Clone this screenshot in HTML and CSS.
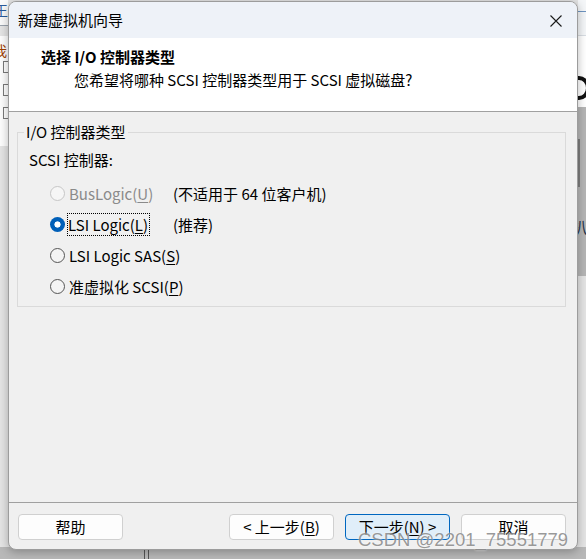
FILE: index.html
```html
<!DOCTYPE html>
<html lang="zh-CN">
<head>
<meta charset="utf-8">
<title>新建虚拟机向导</title>
<link rel="stylesheet" href="styles.css">
</head>
<body>
<div class="desktop">
  <div class="bg-left-top"><span class="bg-char">王</span></div>
  <div class="bg-left-panel">
    <span class="bg-orange">我</span>
    <span class="bg-box"></span>
    <span class="bg-box"></span>
    <span class="bg-box"></span>
  </div>
  <div class="bg-right-top"></div>
  <div class="bg-right-white"><span class="bg-ring"></span></div>
  <div class="bg-right-gray"><span class="bg-bar"></span><span class="bg-rchar">扒</span></div>
  <div class="bg-bottom"><span class="bg-vline"></span></div>

  <div class="dialog">
    <div class="titlebar">
      <span class="title">新建虚拟机向导</span>
      <svg class="close" width="12" height="12" viewBox="0 0 12 12"><path d="M0.5 0.5 L11.5 11.5 M11.5 0.5 L0.5 11.5" stroke="#1a1a1a" stroke-width="1.1" fill="none"/></svg>
    </div>
    <div class="header">
      <div class="h-title">选择 I/O 控制器类型</div>
      <div class="h-sub">您希望将哪种 SCSI 控制器类型用于 SCSI 虚拟磁盘?</div>
    </div>
    <div class="body">
      <fieldset class="group">
        <legend>I/O 控制器类型</legend>
        <div class="group-inner">
          <div class="caption">SCSI 控制器:</div>
          <div class="row disabled">
            <span class="radio"></span>
            <span class="label">BusLogic(<u>U</u>)</span>
            <span class="note">(不适用于 64 位客户机)</span>
          </div>
          <div class="row">
            <span class="radio checked"></span>
            <span class="label"><span class="focus">LSI Logic(<u>L</u>)</span></span>
            <span class="note">(推荐)</span>
          </div>
          <div class="row">
            <span class="radio"></span>
            <span class="label wide">LSI Logic SAS(<u>S</u>)</span>
          </div>
          <div class="row">
            <span class="radio"></span>
            <span class="label wide">准虚拟化 SCSI(<u>P</u>)</span>
          </div>
        </div>
      </fieldset>
    </div>
    <div class="footer">
      <button class="btn">帮助</button>
      <span class="spacer"></span>
      <button class="btn">&lt; 上一步(<u>B</u>)</button>
      <button class="btn primary">下一步(<u>N</u>) &gt;</button>
      <button class="btn">取消</button>
    </div>
  </div>
  <div class="watermark">CSDN @2201_75551779</div>
</div>
</body>
</html>
```
FILE: styles.css
```css
* { box-sizing: border-box; }
html, body {
  margin: 0;
  padding: 0;
  width: 586px;
  height: 559px;
  overflow: hidden;
}
body {
  font-family: "Noto Sans CJK SC", "Noto Sans", sans-serif;
  font-size: 15px;
  color: #000;
  background: #e4e4e4;
}
.desktop {
  position: relative;
  width: 586px;
  height: 559px;
  padding: 1px 8px 0 8px;
}

/* backdrop bits visible around the dialog */
.bg-left-top {
  position: absolute; left: 0; top: 0; width: 8px; height: 26px;
  background: #fafafa; border-bottom: 1px solid #9aa3ad; overflow: hidden;
}
.bg-char { position: absolute; left: -6px; top: 0; font-size: 14px; line-height: 20px; color: #2a5a9a; }
.bg-left-panel {
  position: absolute; left: 0; top: 36px; width: 8px; height: 110px;
  background: #fdfdfd; overflow: hidden;
}
.bg-orange { position: absolute; left: -7px; top: 5px; font-size: 14px; line-height: 18px; color: #a04000; }
.bg-box {
  display: block; position: absolute; left: 3px; width: 8px; height: 12px;
  border: 1px solid #7a7a7a; background: #fff;
}
.bg-box:nth-of-type(2) { top: 25px; }
.bg-box:nth-of-type(3) { top: 48px; }
.bg-box:nth-of-type(4) { top: 71px; }
.bg-right-top {
  position: absolute; right: 0; top: 0; width: 8px; height: 36px;
  background: #f4f6f8; border-top: 12px solid #f4f6f8; border-bottom: 1px solid #d8dde3;
}
.bg-right-top::before { content: ""; position: absolute; left: 0; right: 0; top: -1px; height: 1px; background: #6e94c0; }
.bg-right-white {
  position: absolute; right: 0; top: 36px; width: 8px; height: 71px;
  background: #fff; overflow: hidden;
}
.bg-ring {
  position: absolute; left: -10px; top: 40px; width: 22px; height: 24px;
  border: 4px solid #111; border-radius: 50%;
}
.bg-right-gray {
  position: absolute; right: 0; top: 107px; width: 8px; height: 169px;
  background: #b5b5b5; overflow: hidden;
}
.bg-bar { position: absolute; left: 0; top: 32px; width: 2px; height: 48px; background: #7d7d7d; }
.bg-rchar { position: absolute; left: -6px; top: 110px; font-size: 15px; line-height: 20px; color: #24324a; }
.bg-bottom {
  position: absolute; left: 0; right: 0; bottom: 0; height: 12px;
  background: #b8b8b8;
}
.bg-vline { position: absolute; left: 144px; top: 0; width: 5px; height: 12px; border-left: 1px solid #555; border-right: 1px solid #555; }

/* dialog */
.dialog {
  position: relative;
  z-index: 1;
  width: 570px;
  height: 549px;
  display: flex;
  flex-direction: column;
  background: #f0f0f0;
  border: 1px solid #9c9c9c;
  border-radius: 8px;
  overflow: hidden;
  box-shadow: 0 2px 10px rgba(0, 0, 0, 0.28);
}
.titlebar {
  height: 36px;
  flex: none;
  display: flex;
  align-items: center;
  justify-content: space-between;
  padding: 0 15px 0 9px;
  background: #eef2f8;
}
.title { font-size: 15px; line-height: 20px; }
.close { display: block; margin-top: 1px; }

.header {
  flex: none;
  height: 74px;
  background: #fff;
  border-bottom: 1px solid #a0a0a0;
  padding: 9px 0 0 32px;
}
.h-title { font-weight: bold; line-height: 20px; }
.h-sub { line-height: 20px; margin-top: 3px; padding-left: 33px; }

.body {
  flex: 1;
  padding: 10px 11px 0 8px;
}
.group {
  margin: 0;
  padding: 8px 0 4px 6px;
  border: 1px solid #dadada;
  min-width: 0;
}
.group legend {
  padding: 0 2px;
  line-height: 20px;
}
.group-inner { padding-left: 5px; }
.caption { line-height: 20px; height: 28px; }
.row {
  display: grid;
  grid-template-columns: 21px 15px 4px 104px auto;
  align-items: center;
  height: 31px;
}
.row .radio { grid-column: 2; }
.row .label { grid-column: 4; white-space: nowrap; line-height: 20px; }
.row .label.wide { grid-column: 4 / 6; }
.row .note { grid-column: 5; white-space: nowrap; line-height: 20px; }
.radio {
  display: block;
  width: 15px;
  height: 15px;
  border-radius: 50%;
  border: 1px solid #555;
  background: #f4f4f4;
}
.radio.checked {
  border: none;
  background: radial-gradient(circle, #fff 0 2.8px, #005fb8 3.4px);
}
.disabled .radio { border-color: #c6c6c6; background: #f6f6f6; }
.disabled .label { color: #8a8a8a; }
.focus {
  outline: 1px dotted #000;
  outline-offset: 0;
  padding: 0 1px 0 0;
  margin-left: -1px;
}
u { text-decoration-thickness: 1px; text-underline-offset: 2px; }

.footer {
  flex: none;
  height: 47px;
  border-top: 1px solid #a0a0a0;
  display: flex;
  align-items: flex-start;
  gap: 11px;
  padding: 11px 11px 0 9px;
}
.spacer { flex: 1; }
.btn {
  width: 105px;
  height: 26px;
  font: inherit;
  font-size: 15px;
  line-height: 20px;
  color: #000;
  background: #fdfdfd;
  border: 1px solid #d0d0d0;
  border-radius: 4px;
  padding: 0;
}
.btn.primary {
  background: #e0eef9;
  border-color: #0067c0;
}

.watermark {
  position: absolute;
  z-index: 2;
  left: 358px;
  top: 527px;
  font-family: "Liberation Sans", Arial, sans-serif;
  font-size: 18.5px;
  line-height: 26px;
  color: rgba(120, 120, 120, 0.75);
  text-shadow: 0 0 2px rgba(255, 255, 255, 0.9);
  white-space: nowrap;
}
```
